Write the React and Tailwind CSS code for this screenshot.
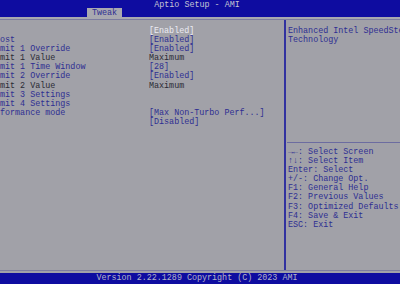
import React from "react";

const rows = [
  { label: "", value: "[Enabled]", labelTone: "blue", valueTone: "white" },
  { label: "ost", value: "[Enabled]", labelTone: "blue", valueTone: "blue" },
  { label: "mit 1 Override", value: "[Enabled]", labelTone: "blue", valueTone: "blue" },
  { label: "mit 1 Value", value: "Maximum", labelTone: "dark", valueTone: "dark" },
  { label: "mit 1 Time Window", value: "[28]", labelTone: "blue", valueTone: "blue" },
  { label: "mit 2 Override", value: "[Enabled]", labelTone: "blue", valueTone: "blue" },
  { label: "mit 2 Value", value: "Maximum", labelTone: "dark", valueTone: "dark" },
  { label: "mit 3 Settings", value: "", labelTone: "blue", valueTone: "blue" },
  { label: "mit 4 Settings", value: "", labelTone: "blue", valueTone: "blue" },
  { label: "formance mode", value: "[Max Non-Turbo Perf...]", labelTone: "blue", valueTone: "blue" },
  { label: "", value: "[Disabled]", labelTone: "blue", valueTone: "blue" },
];

const help = [
  "\u2192\u2190: Select Screen",
  "\u2191\u2193: Select Item",
  "Enter: Select",
  "+/-: Change Opt.",
  "F1: General Help",
  "F2: Previous Values",
  "F3: Optimized Defaults",
  "F4: Save & Exit",
  "ESC: Exit",
];

const tone = {
  blue: "text-[#2e2e92]",
  dark: "text-[#2a2a34]",
  white: "text-[#ececf4]",
};

function App() {
  return (
    <div
      className="w-[400px] h-[284px] bg-[#a1a1a8] flex flex-col overflow-hidden text-[8.4px] leading-[9.1px]"
      style={{ fontFamily: '"Liberation Mono", "DejaVu Sans Mono", monospace' }}
    >
      {/* Header */}
      <div className="h-[17px] bg-[#0e0ca0] flex flex-col shrink-0">
        <div className="h-[8px] pt-[1px] pr-[6px] text-center text-[#c4c4d4] leading-[8px] whitespace-pre">
          Aptio Setup - AMI
        </div>
        <div className="flex pl-[87px]">
          <div className="w-[35px] h-[9px] bg-[#a8a8b0] text-[#2e2e92] text-center leading-[10px]">
            Tweak
          </div>
        </div>
      </div>
      <div className="h-[2px] bg-[#a8a8b0] shrink-0" />
      <div className="h-[1px] bg-[#7c7ca0] shrink-0" />

      {/* Main */}
      <div className="h-[250px] flex shrink-0">
        <div className="w-[284px] pt-[7px] overflow-hidden">
          {rows.map((r, i) => (
            <div key={i} className="flex h-[9.1px] whitespace-pre">
              <div className={`w-[149px] ${tone[r.labelTone]}`}>{r.label}</div>
              <div className={tone[r.valueTone]}>{r.value}</div>
            </div>
          ))}
        </div>
        <div className="w-[2px] bg-[#3232a0]" />
        <div className="flex-1 flex flex-col overflow-hidden">
          <div className="h-[122px] pt-[7px] pl-[2px] text-[#2e2e92] whitespace-pre">
            <div>Enhanced Intel SpeedStep(R)</div>
            <div>Technology</div>
          </div>
          <div className="h-[1px] ml-[1px] bg-[#6c6ca0]" />
          <div className="pt-[5px] pl-[2px] text-[#2e2e92] whitespace-pre">
            {help.map((h) => (
              <div key={h}>{h}</div>
            ))}
          </div>
        </div>
      </div>

      {/* Footer */}
      <div className="h-[1px] bg-[#7c7ca0] shrink-0" />
      <div className="h-[2px] shrink-0" />
      <div className="flex-1 bg-[#0e0ca0] text-[#b4b4c8] text-center pr-[6px] leading-[11px] whitespace-pre">
        Version 2.22.1289 Copyright (C) 2023 AMI
      </div>
    </div>
  );
}

export default App;
